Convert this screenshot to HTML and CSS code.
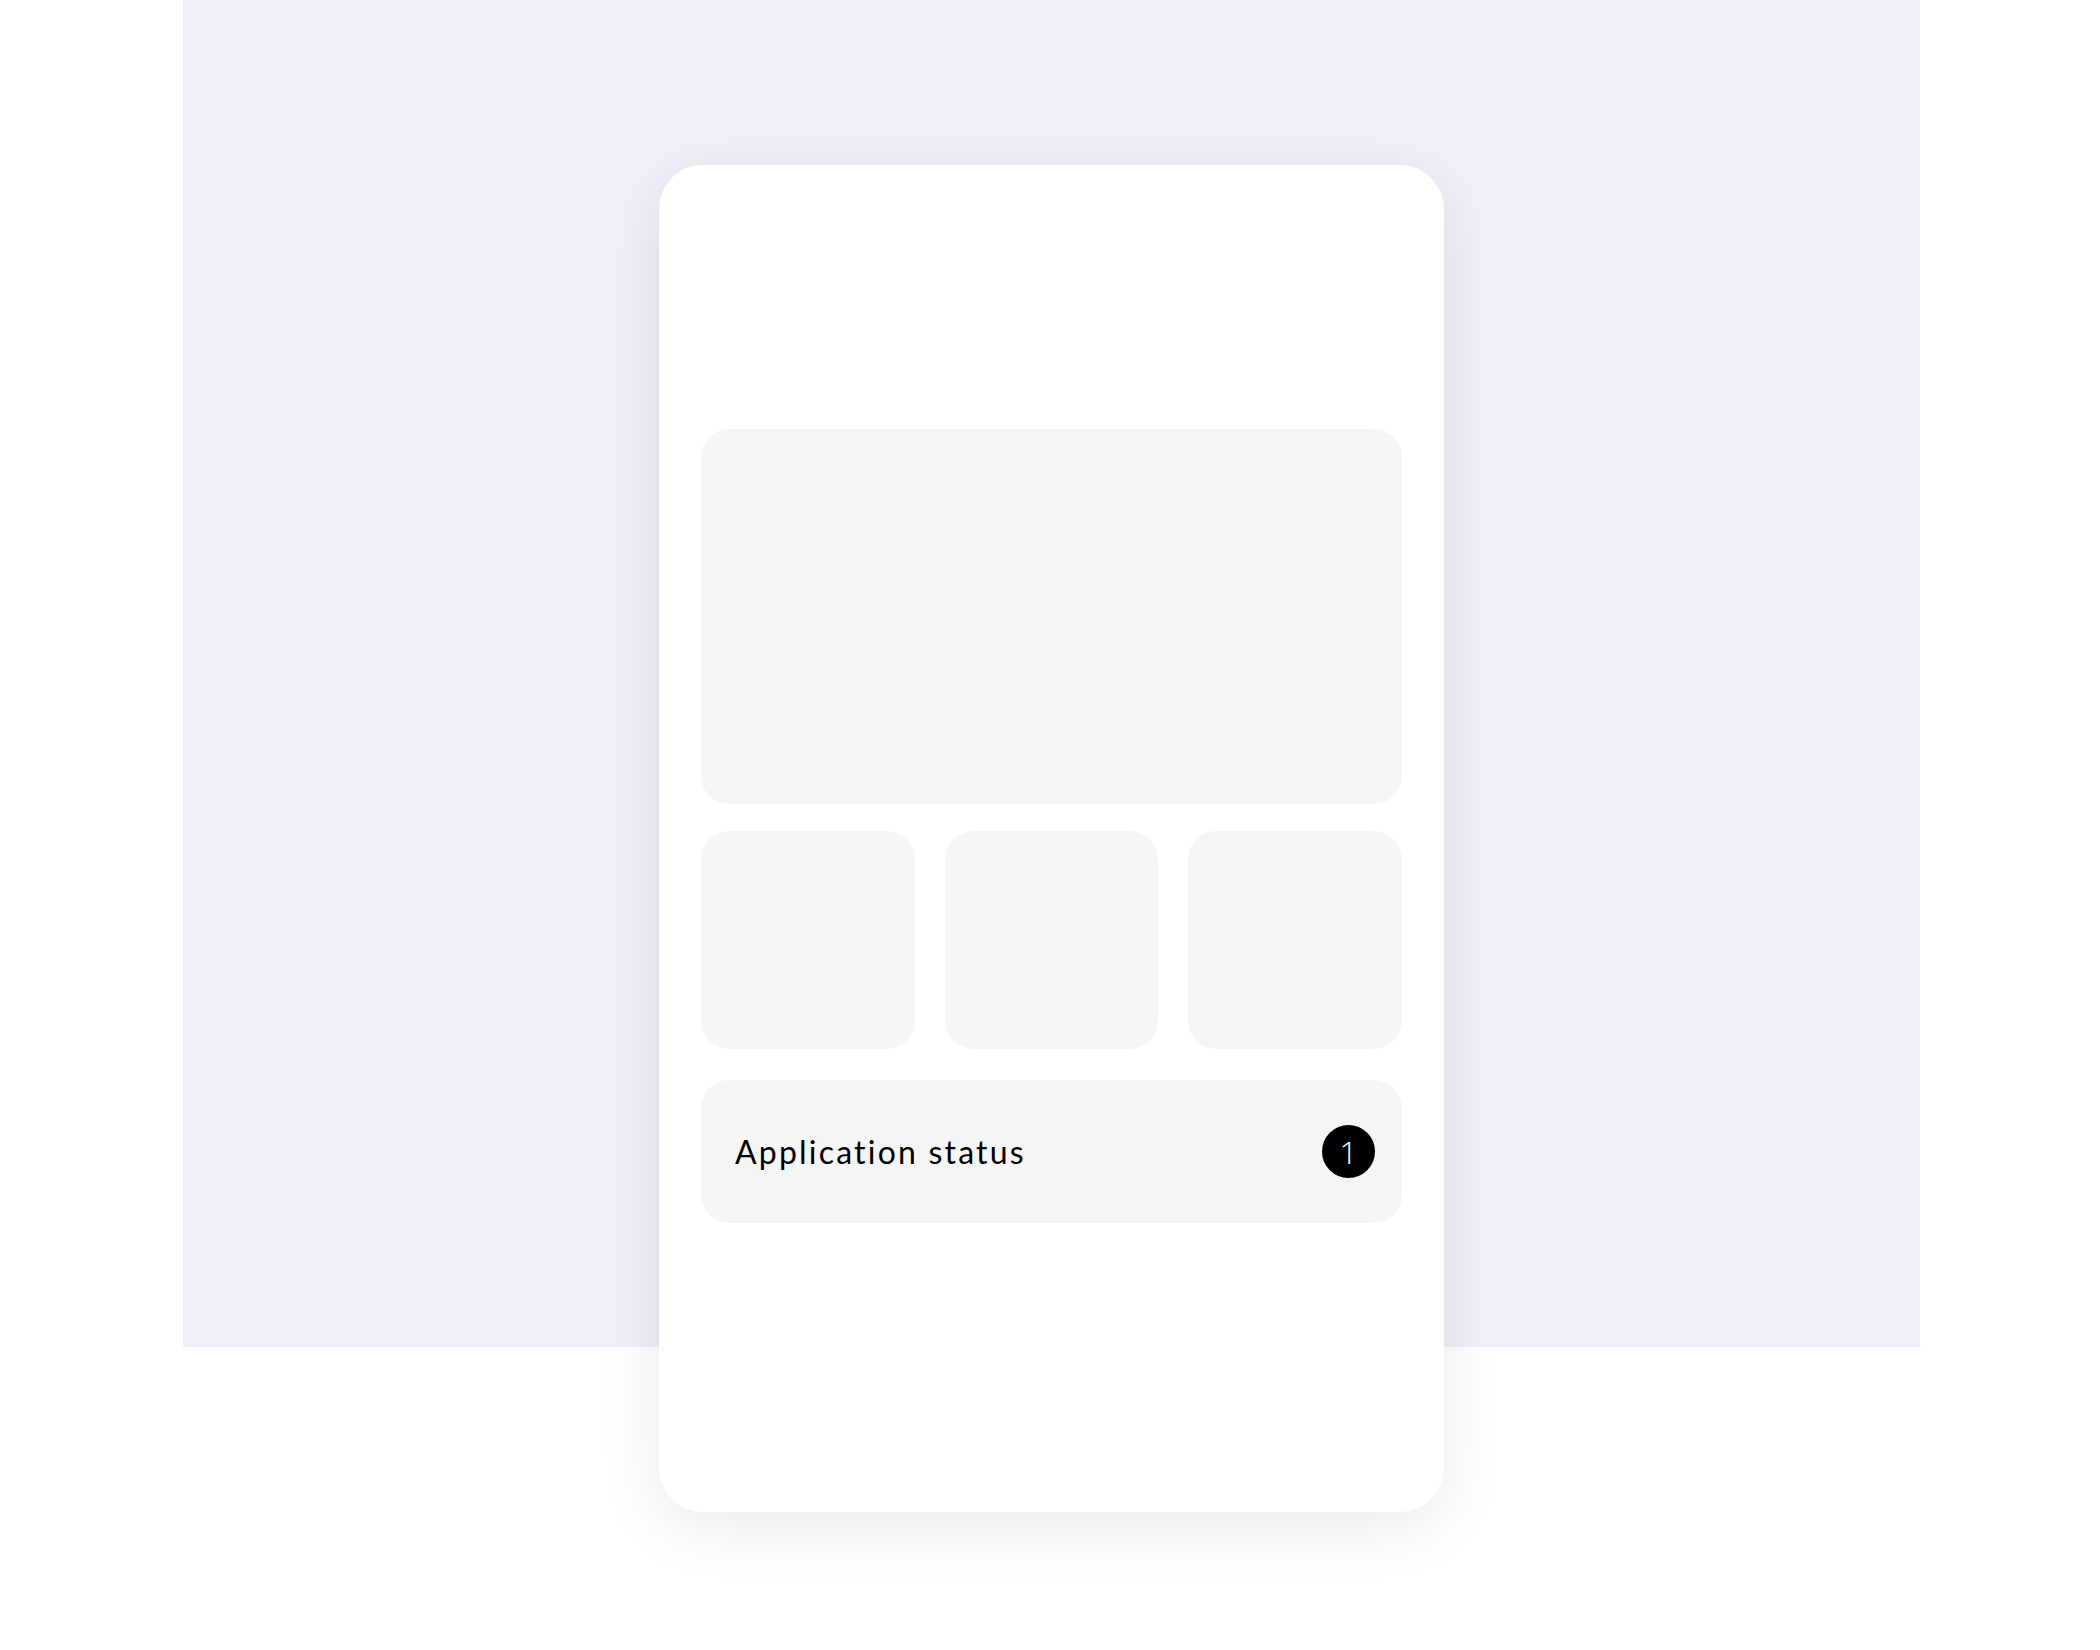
FILE: index.html
```html
<!DOCTYPE html>
<html lang="en">
<head>
    <meta charset="UTF-8">
    <meta name="viewport" content="width=device-width, initial-scale=1.0">
    <title>Application status</title>
    <link rel="stylesheet" href="styles.css">
</head>
<body>
    <div class="hero">
        <div class="phone">
            <div class="card card-large"></div>

            <div class="tiles">
                <div class="card card-tile"></div>
                <div class="card card-tile"></div>
                <div class="card card-tile"></div>
            </div>

            <div class="card status-row">
                <span class="status-label">Application status</span>
                <span class="badge">1</span>
            </div>
        </div>
    </div>
</body>
</html>
```

FILE: styles.css
```css
body {
    margin: 0;
    background-color: #ffffff;
    font-family: Lato, "Open Sans", sans-serif;
    color: #000000;
}

/* purple band stops at 1347px, the phone runs past it */
.hero {
    width: 1737px;
    margin-left: 183px;
    padding: 165px 0 138px;
    background: linear-gradient(#f2eff9, #f2eff9) top left / 100% 1347px no-repeat;
}

.phone {
    box-sizing: border-box;
    width: 785px;
    height: 1347px;
    margin: 0 auto;
    padding: 264px 42px 0;
    background: white;
    border-radius: 44px;
    box-shadow: 0 14px 64px rgba(0, 0, 0, 0.09);
    display: flex;
    flex-direction: column;
    gap: 27px;
}

.card {
    background-color: #f5f5f5;
    border-radius: 28px;
}

.card-large {
    height: 375px;
}

.tiles {
    display: flex;
    gap: 30px;
}

.card-tile {
    flex: 1;
    height: 218px;
}

.status-row {
    margin-top: 4px;
    height: 143px;
    padding: 0 27px 0 34px;
    display: flex;
    align-items: center;
    justify-content: space-between;
}

.status-label {
    font-size: 32px;
    letter-spacing: 2.2px;
}

.badge {
    width: 53px;
    height: 53px;
    border-radius: 50%;
    background: black;
    color: white;
    font-family: "Open Sans", sans-serif;
    font-size: 32px;
    font-weight: 300;
    display: flex;
    align-items: center;
    justify-content: center;
}
```
